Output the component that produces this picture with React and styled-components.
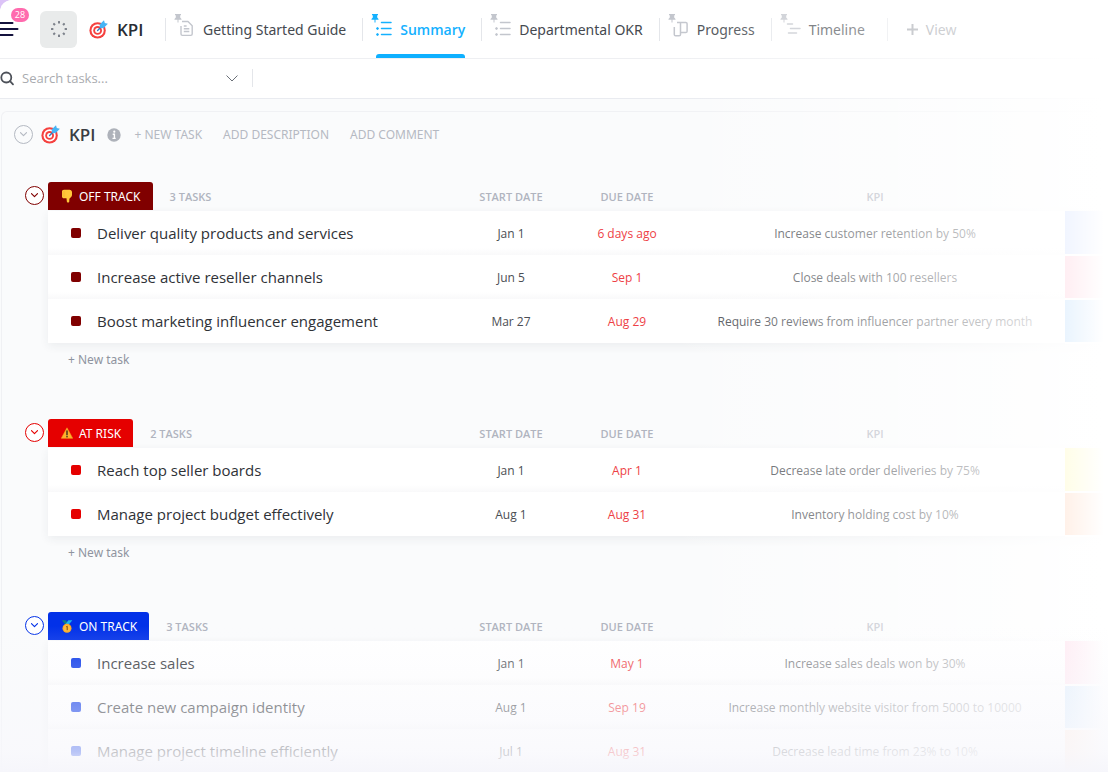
import React, { useState } from 'react';
import styled, { createGlobalStyle } from 'styled-components';

const GlobalStyle = createGlobalStyle`
  * {
    box-sizing: border-box;
  }

  body {
    margin: 0;
    background: #dcc3f7;
    font-family: 'Open Sans', 'Noto Sans', sans-serif;
    color: #292d34;
  }

  button,
  input {
    font-family: inherit;
    border: none;
    background: none;
    padding: 0;
  }

  button {
    cursor: pointer;
  }
`;

const wideFont = "'Noto Sans', 'Open Sans', sans-serif";

const Frame = styled.div`
  position: relative;
  height: 100vh;
  overflow: hidden;
  display: flex;
  flex-direction: column;
  background: #fafbfc;
  border-top-left-radius: 12px;

  &::before,
  &::after {
    content: '';
    position: absolute;
    z-index: 2;
    pointer-events: none;
  }

  &::before {
    top: 0;
    bottom: 0;
    right: 0;
    width: 440px;
    background: linear-gradient(
      to right,
      rgba(255, 255, 255, 0) 0%,
      rgba(255, 255, 255, 0.22) 22%,
      rgba(255, 255, 255, 0.48) 50%,
      rgba(255, 255, 255, 0.74) 78%,
      rgba(255, 255, 255, 0.9) 91%,
      #fff 99%
    );
  }

  &::after {
    left: 0;
    right: 0;
    bottom: 0;
    height: 146px;
    background: linear-gradient(
      to bottom,
      rgba(248, 248, 252, 0),
      rgba(248, 248, 252, 0.48) 55%,
      rgba(248, 248, 252, 0.74) 86%,
      #f6f6fb
    );
  }
`;

const TopBar = styled.header`
  display: flex;
  align-items: stretch;
  height: 59px;
  flex-shrink: 0;
  background: #fff;
  border-bottom: 1px solid #eeeff2;
`;

const MenuButton = styled.button`
  position: relative;
  width: 40px;
  display: flex;
  align-items: center;
`;

const Badge = styled.span`
  position: absolute;
  left: 11px;
  top: 8px;
  width: 18px;
  border-radius: 7px;
  background: #ff6bae;
  color: #fff;
  font-size: 9px;
  line-height: 14px;
  text-align: center;
`;

const SpaceButton = styled.button`
  align-self: center;
  width: 37px;
  height: 37px;
  margin-right: 12px;
  border-radius: 6px;
  background: #e9ebeb;
  display: flex;
  align-items: center;
  justify-content: center;
`;

const BarTitle = styled.h1`
  display: flex;
  align-items: center;
  gap: 9px;
  width: 76px;
  margin: 0;
  font-size: 17px;
  font-weight: 600;
`;

const Tabs = styled.nav`
  display: flex;
  align-items: stretch;
`;

const TabSlot = styled.div`
  display: flex;
  align-items: stretch;
  padding-right: 16px;

  &::before {
    content: '';
    align-self: center;
    width: 1px;
    height: 23px;
    margin-right: 13px;
    background: #e4e6ea;
  }

  &:last-child {
    margin-left: 6px;
  }

  &:last-child::before {
    margin-right: 19px;
  }
`;

const Tab = styled.a`
  position: relative;
  display: flex;
  align-items: center;
  gap: 8px;
  font-family: ${(p) => (p.$active ? 'inherit' : wideFont)};
  font-size: 14px;
  font-weight: ${(p) => (p.$active ? 600 : 400)};
  color: ${(p) => (p.$active ? '#14b1ff' : '#45494f')};
  text-decoration: none;
  white-space: nowrap;

  svg {
    color: ${(p) => (p.$active ? '#14b1ff' : '#c3c6cd')};
  }

  &::after {
    content: '';
    display: ${(p) => (p.$active ? 'block' : 'none')};
    position: absolute;
    left: 0;
    right: 0;
    bottom: 0;
    height: 4px;
    border-radius: 3px 3px 0 0;
    background: #0eb0ff;
  }
`;

const PinMark = styled.span`
  position: absolute;
  left: -5px;
  top: 13px;
  line-height: 0;
`;

const AddView = styled.button`
  display: flex;
  align-items: center;
  gap: 8px;
  font-family: ${wideFont};
  font-size: 14px;
  color: #868a92;
`;

const SearchBar = styled.div`
  display: flex;
  align-items: center;
  height: 40px;
  padding-bottom: 1px;
  flex-shrink: 0;
  background: #fff;
  border-bottom: 1px solid #e9ebf0;
`;

const SearchField = styled.label`
  display: flex;
  align-items: center;
  gap: 7px;
  width: 226px;
`;

const SearchInput = styled.input`
  flex: 1;
  min-width: 0;
  outline: none;
  font-size: 13px;
  color: #292d34;

  &::placeholder {
    color: #a9abaf;
    opacity: 1;
  }
`;

const SearchOptions = styled.button`
  display: flex;
  color: #6b7078;
`;

const Divider = styled.span`
  width: 1px;
  height: 18px;
  margin-left: 14px;
  background: #e4e6ea;
`;

const Panel = styled.main`
  flex: 1;
  min-height: 0;
  margin: 12px 0 0 1px;
  padding-left: 1px;
  border: 1px solid #f0f1f4;
  border-right: none;
  border-bottom: none;
  border-top-left-radius: 6px;
`;

const PanelHeader = styled.div`
  display: flex;
  align-items: center;
  height: 45px;
  padding-left: 11px;
  margin-bottom: 25px;
`;

const PanelTitle = styled.h2`
  display: flex;
  align-items: center;
  gap: 9px;
  margin: 0 11px 0 8px;
  font-size: 17px;
  font-weight: 600;
  color: #3a3d43;
`;

const HeaderActions = styled.div`
  display: flex;
  gap: 21px;
  margin-left: 14px;
`;

const HeaderAction = styled.button`
  font-family: ${wideFont};
  font-size: 12px;
  color: #b5b9c2;
  white-space: nowrap;
`;

const Toggle = styled.button`
  width: 19px;
  height: 19px;
  flex-shrink: 0;
  display: flex;
  align-items: center;
  justify-content: center;
  border: 1px solid ${(p) => p.$color};
  border-radius: 50%;
  color: ${(p) => p.$color};
  background: ${(p) => (p.$filled ? '#fff' : 'transparent')};

  svg {
    transform: ${(p) => (p.$closed ? 'rotate(-90deg)' : 'none')};
  }
`;

const GroupBox = styled.section`
  display: flex;
  align-items: flex-start;
  gap: 4px;
  padding-left: 22px;
  margin-bottom: 44px;

  > ${Toggle} {
    margin-top: 4px;
  }
`;

const GroupBody = styled.div`
  flex: 1;
  min-width: 0;
`;

const TaskTable = styled.table`
  width: 100%;
  table-layout: fixed;
  border-collapse: collapse;

  tbody {
    box-shadow: 0 3px 9px rgba(40, 50, 70, 0.07);
  }
`;

const HeadCell = styled.th`
  width: ${(p) => p.$width || 'auto'};
  height: 29px;
  padding: 0;
  font-size: 11px;
  font-weight: 600;
  line-height: 29px;
  color: #b0b4bf;
  text-align: ${(p) => (p.$width ? 'center' : 'left')};
  vertical-align: top;
`;

const GroupHeading = styled.div`
  display: flex;
  align-items: flex-start;
  gap: 17px;
`;

const StatusTag = styled.span`
  display: flex;
  align-items: center;
  gap: 6px;
  height: 28px;
  padding: 0 12px 0 13px;
  border-radius: 3px 3px 0 0;
  background: ${(p) => p.$color};
  color: #fff;
  font-family: ${wideFont};
  font-size: 12px;
  font-weight: 400;
`;

const Cell = styled.td`
  height: 44px;
  padding: 0;
  background: linear-gradient(to bottom, #fff 84%, #f9f9fa);
  font-size: 12px;
  color: ${(p) => (p.$late ? '#ee3f46' : '#4b4e54')};
  text-align: center;
  white-space: nowrap;

  tr:last-child > & {
    background: #fff;
  }
`;

const TaskName = styled.div`
  display: flex;
  align-items: center;
  gap: 16px;
  padding-left: 23px;
  font-size: 15px;
  color: #2f3237;
`;

const StatusSquare = styled.span`
  width: 10px;
  height: 10px;
  border-radius: 2px;
  background: ${(p) => p.$color};
`;

const SwatchCell = styled.td`
  padding: 0;
  border-bottom: 2px solid #fff;
  background: ${(p) => p.$color};
  background-clip: padding-box;
`;

const NewTask = styled.button`
  display: block;
  height: 31px;
  padding-left: 20px;
  font-family: ${wideFont};
  font-size: 12px;
  color: #8f949f;
`;

const TargetIcon = ({ size = 19 }) => (
  <svg width={size} height={size} viewBox="0 0 19 19" aria-hidden="true">
    <circle cx="8.6" cy="10.4" r="8.2" fill="#f5413f" />
    <circle cx="8.6" cy="10.4" r="6.1" fill="#fff" />
    <circle cx="8.6" cy="10.4" r="4.4" fill="#f5413f" />
    <circle cx="8.6" cy="10.4" r="2.5" fill="#fff" />
    <path d="M8.6 10.4 14 5" stroke="#2f7fc4" strokeWidth="1.4" strokeLinecap="round" />
    <path d="M10.600 4.600 15 .2l.8 2.700 3.100.9-4.400 4.400-3.400-.4z" fill="#45b4f5" />
  </svg>
);

const ThumbDownIcon = () => (
  <svg width="12" height="14" viewBox="0 0 12 14" aria-hidden="true">
    <path d="M3 .8h5.500C10 .8 11 1.800 11 3.200v2.600c0 1.500-.8 2.300-1.700 2.900-.7.500-1 1.100-1 2v1.500c0 .8-.5 1.300-1.200 1.300-.8 0-1.200-.5-1.300-1.300L5.500 9.300H3C1.800 9.300 1 8.500 1 7.400V2.600C1 1.500 1.800.8 3 .8z" fill="#ffc83a" />
    <path d="M1.400 3h2.800M1.200 5h3M1.400 7h2.800" stroke="#eda92a" strokeWidth=".5" />
  </svg>
);

const WarningIcon = () => (
  <svg width="12" height="12" viewBox="0 0 12 12" aria-hidden="true">
    <path d="M6 .8 11.700 11.300H.3z" fill="#ffb02e" stroke="#f2a01f" strokeWidth=".6" strokeLinejoin="round" />
    <path d="M6 4v3.800" stroke="#2b2318" strokeWidth="1.300" strokeLinecap="round" />
    <circle cx="6" cy="9.700" r=".8" fill="#2b2318" />
  </svg>
);

const MedalIcon = () => (
  <svg width="12" height="13" viewBox="0 0 12 13" aria-hidden="true">
    <path d="M.8.300h4l2.200 3.500-2.500 1z" fill="#0f7f86" />
    <path d="M11.400.300h-4L4.600 4l3 .800z" fill="#19b5ee" />
    <circle cx="6" cy="8.200" r="4.500" fill="#f9a825" />
    <circle cx="6" cy="8.200" r="3.300" fill="#fdb93a" />
    <path d="M5.300 6.800 6.200 6.200v4" stroke="#7a4a10" strokeWidth="1" fill="none" />
  </svg>
);

const MenuIcon = () => (
  <svg width="19" height="16" viewBox="0 0 19 16" aria-hidden="true">
    <path d="M0 2h12.500M0 8h17.500M0 14h12.500" stroke="#14123d" strokeWidth="2" strokeLinecap="round" />
  </svg>
);

const DottedCircleIcon = () => (
  <svg width="18" height="18" viewBox="0 0 18 18" fill="#7d828b" aria-hidden="true">
    {[0, 45, 90, 135, 180, 225, 270, 315].map((angle) => (
      <rect key={angle} x="8" y="1" width="2" height="2.400" rx=".5" transform={`rotate(${angle} 9 9)`} />
    ))}
  </svg>
);

const PinIcon = () => (
  <svg width="8" height="10" viewBox="0 0 8 10" fill="currentColor" aria-hidden="true">
    <path d="M1 1h6v1.200H6.200V4.500L7.500 6v.8H4.500V9.500h-1V6.800H.5V6l1.300-1.500V2.200H1z" />
  </svg>
);

const DocIcon = () => (
  <svg width="16" height="18" viewBox="0 0 16 18" fill="none" stroke="currentColor" strokeWidth="1.400" aria-hidden="true">
    <path d="M3 1.500h6L13.200 5.700v8.300c0 .8-.6 1.400-1.400 1.400H3.400c-.8 0-1.400-.6-1.400-1.400V6" strokeLinejoin="round" />
    <path d="M4.800 6h2.800M4.800 8.700h5.500M4.800 11.500h5.500" />
  </svg>
);

const ListIcon = () => (
  <svg width="16" height="16" viewBox="0 0 16 16" stroke="currentColor" fill="currentColor" aria-hidden="true">
    <path d="M5.500 1.500H15M5.500 7.500H15M5.500 13.500H15" strokeWidth="1.500" strokeLinecap="round" />
    <circle cx="1.500" cy="7.500" r=".9" />
    <circle cx="1.500" cy="13.500" r=".9" />
  </svg>
);

const BoardIcon = () => (
  <svg width="16" height="17" viewBox="0 0 16 17" fill="none" stroke="currentColor" strokeWidth="1.500" aria-hidden="true">
    <path d="M4 1.500H12.800c.8 0 1.300.5 1.300 1.300v7.400c0 .8-.5 1.300-1.300 1.300H7.500" />
    <path d="M7.500 1.500v12c0 .8-.5 1.300-1.300 1.300H2.600c-.8 0-1.300-.5-1.300-1.300V6" />
  </svg>
);

const TimelineIcon = () => (
  <svg width="16" height="14" viewBox="0 0 16 14" stroke="currentColor" strokeWidth="1.500" strokeLinecap="round" aria-hidden="true">
    <path d="M2.500 2h5M5.500 6.500h9.500M3.500 11h8" />
  </svg>
);

const PlusIcon = () => (
  <svg width="11" height="11" viewBox="0 0 11 11" stroke="#8f939b" strokeWidth="2" aria-hidden="true">
    <path d="M5.500 0v11M0 5.500h11" />
  </svg>
);

const SearchIcon = () => (
  <svg width="15" height="15" viewBox="0 0 15 15" fill="none" stroke="#4d5159" strokeWidth="1.800" aria-hidden="true">
    <circle cx="6.300" cy="6.500" r="5" />
    <path d="M10 10.200 13 13.400" strokeLinecap="round" />
  </svg>
);

const ChevronIcon = ({ width = 12, stroke = 1 }) => (
  <svg width={width} height={width / 2 + 1} viewBox="0 0 12 7" fill="none" stroke="currentColor" strokeWidth={stroke} aria-hidden="true">
    <path d="M.8.800 6 6 11.200.800" strokeLinecap="round" strokeLinejoin="round" />
  </svg>
);

const InfoIcon = () => (
  <svg width="14" height="14" viewBox="0 0 14 14" aria-hidden="true">
    <circle cx="7" cy="7" r="6.700" fill="#aeb2ba" />
    <circle cx="7.300" cy="3.700" r="1.100" fill="#fff" />
    <path d="M5.700 6.200h1.700v4M5.500 10.400h3.200" stroke="#fff" strokeWidth="1.400" fill="none" />
  </svg>
);

const tabs = [
  { label: 'Getting Started Guide', icon: <DocIcon /> },
  { label: 'Summary', icon: <ListIcon />, active: true },
  { label: 'Departmental OKR', icon: <ListIcon /> },
  { label: 'Progress', icon: <BoardIcon /> },
  { label: 'Timeline', icon: <TimelineIcon /> },
];

const groups = [
  {
    status: 'OFF TRACK',
    color: '#800000',
    icon: <ThumbDownIcon />,
    canAdd: true,
    tasks: [
      { name: 'Deliver quality products and services', start: 'Jan 1', due: '6 days ago', kpi: 'Increase customer retention by 50%', swatch: '#7da5ff' },
      { name: 'Increase active reseller channels', start: 'Jun 5', due: 'Sep 1', kpi: 'Close deals with 100 resellers', swatch: '#ff6590' },
      { name: 'Boost marketing influencer engagement', start: 'Mar 27', due: 'Aug 29', kpi: 'Require 30 reviews from influencer partner every month', swatch: '#3a9cf5' },
    ],
  },
  {
    status: 'AT RISK',
    color: '#e50000',
    icon: <WarningIcon />,
    canAdd: true,
    tasks: [
      { name: 'Reach top seller boards', start: 'Jan 1', due: 'Apr 1', kpi: 'Decrease late order deliveries by 75%', swatch: '#fff02a' },
      { name: 'Manage project budget effectively', start: 'Aug 1', due: 'Aug 31', kpi: 'Inventory holding cost by 10%', swatch: '#ff7e30' },
    ],
  },
  {
    status: 'ON TRACK',
    color: '#0231e8',
    icon: <MedalIcon />,
    canAdd: false,
    tasks: [
      { name: 'Increase sales', start: 'Jan 1', due: 'May 1', kpi: 'Increase sales deals won by 30%', swatch: '#ff5fa0' },
      { name: 'Create new campaign identity', start: 'Aug 1', due: 'Sep 19', kpi: 'Increase monthly website visitor from 5000 to 10000', swatch: '#1a86ee' },
      { name: 'Manage project timeline efficiently', start: 'Jul 1', due: 'Aug 31', kpi: 'Decrease lead time from 23% to 10%', swatch: '#ff7e30' },
    ],
  },
];

const TaskGroup = ({ group }) => {
  const [open, setOpen] = useState(true);

  return (
    <GroupBox>
      <Toggle
        $color={group.color}
        $filled
        $closed={!open}
        aria-label={`Toggle ${group.status}`}
        aria-expanded={open}
        onClick={() => setOpen(!open)}
      >
        <ChevronIcon width={7} stroke={2} />
      </Toggle>
      <GroupBody>
        <TaskTable>
          <thead>
            <tr>
              <HeadCell scope="col">
                <GroupHeading>
                  <StatusTag $color={group.color}>
                    {group.icon}
                    {group.status}
                  </StatusTag>
                  {group.tasks.length} TASKS
                </GroupHeading>
              </HeadCell>
              <HeadCell scope="col" $width="116px">START DATE</HeadCell>
              <HeadCell scope="col" $width="116px">DUE DATE</HeadCell>
              <HeadCell scope="col" $width="380px">KPI</HeadCell>
              <HeadCell scope="col" $width="43px" aria-label="Category" />
            </tr>
          </thead>
          {open && (
            <tbody>
              {group.tasks.map((task) => (
                <tr key={task.name}>
                  <Cell>
                    <TaskName>
                      <StatusSquare $color={group.color} />
                      {task.name}
                    </TaskName>
                  </Cell>
                  <Cell>{task.start}</Cell>
                  <Cell $late>{task.due}</Cell>
                  <Cell>{task.kpi}</Cell>
                  <SwatchCell $color={task.swatch} />
                </tr>
              ))}
            </tbody>
          )}
        </TaskTable>
        {group.canAdd && <NewTask>+ New task</NewTask>}
      </GroupBody>
    </GroupBox>
  );
};

const App = () => {
  const [query, setQuery] = useState('');

  return (
    <>
      <GlobalStyle />
      <Frame>
        <TopBar>
          <MenuButton aria-label="Menu">
            <MenuIcon />
            <Badge>28</Badge>
          </MenuButton>
          <SpaceButton aria-label="Space">
            <DottedCircleIcon />
          </SpaceButton>
          <BarTitle>
            <TargetIcon />
            KPI
          </BarTitle>
          <Tabs>
            {tabs.map((tab) => (
              <TabSlot key={tab.label}>
                <Tab href="#" $active={tab.active}>
                  <PinMark>
                    <PinIcon />
                  </PinMark>
                  {tab.icon}
                  {tab.label}
                </Tab>
              </TabSlot>
            ))}
            <TabSlot>
              <AddView>
                <PlusIcon />
                View
              </AddView>
            </TabSlot>
          </Tabs>
        </TopBar>

        <SearchBar>
          <SearchField>
            <SearchIcon />
            <SearchInput
              type="text"
              aria-label="Search tasks"
              placeholder="Search tasks..."
              value={query}
              onChange={(e) => setQuery(e.target.value)}
            />
          </SearchField>
          <SearchOptions aria-label="Search options">
            <ChevronIcon />
          </SearchOptions>
          <Divider />
        </SearchBar>

        <Panel>
          <PanelHeader>
            <Toggle $color="#b4b9c2" aria-label="Toggle list">
              <ChevronIcon width={7} stroke={2} />
            </Toggle>
            <PanelTitle>
              <TargetIcon />
              KPI
            </PanelTitle>
            <InfoIcon />
            <HeaderActions>
              <HeaderAction>+ NEW TASK</HeaderAction>
              <HeaderAction>ADD DESCRIPTION</HeaderAction>
              <HeaderAction>ADD COMMENT</HeaderAction>
            </HeaderActions>
          </PanelHeader>
          {groups.map((group) => (
            <TaskGroup key={group.status} group={group} />
          ))}
        </Panel>
      </Frame>
    </>
  );
};

export default App;
